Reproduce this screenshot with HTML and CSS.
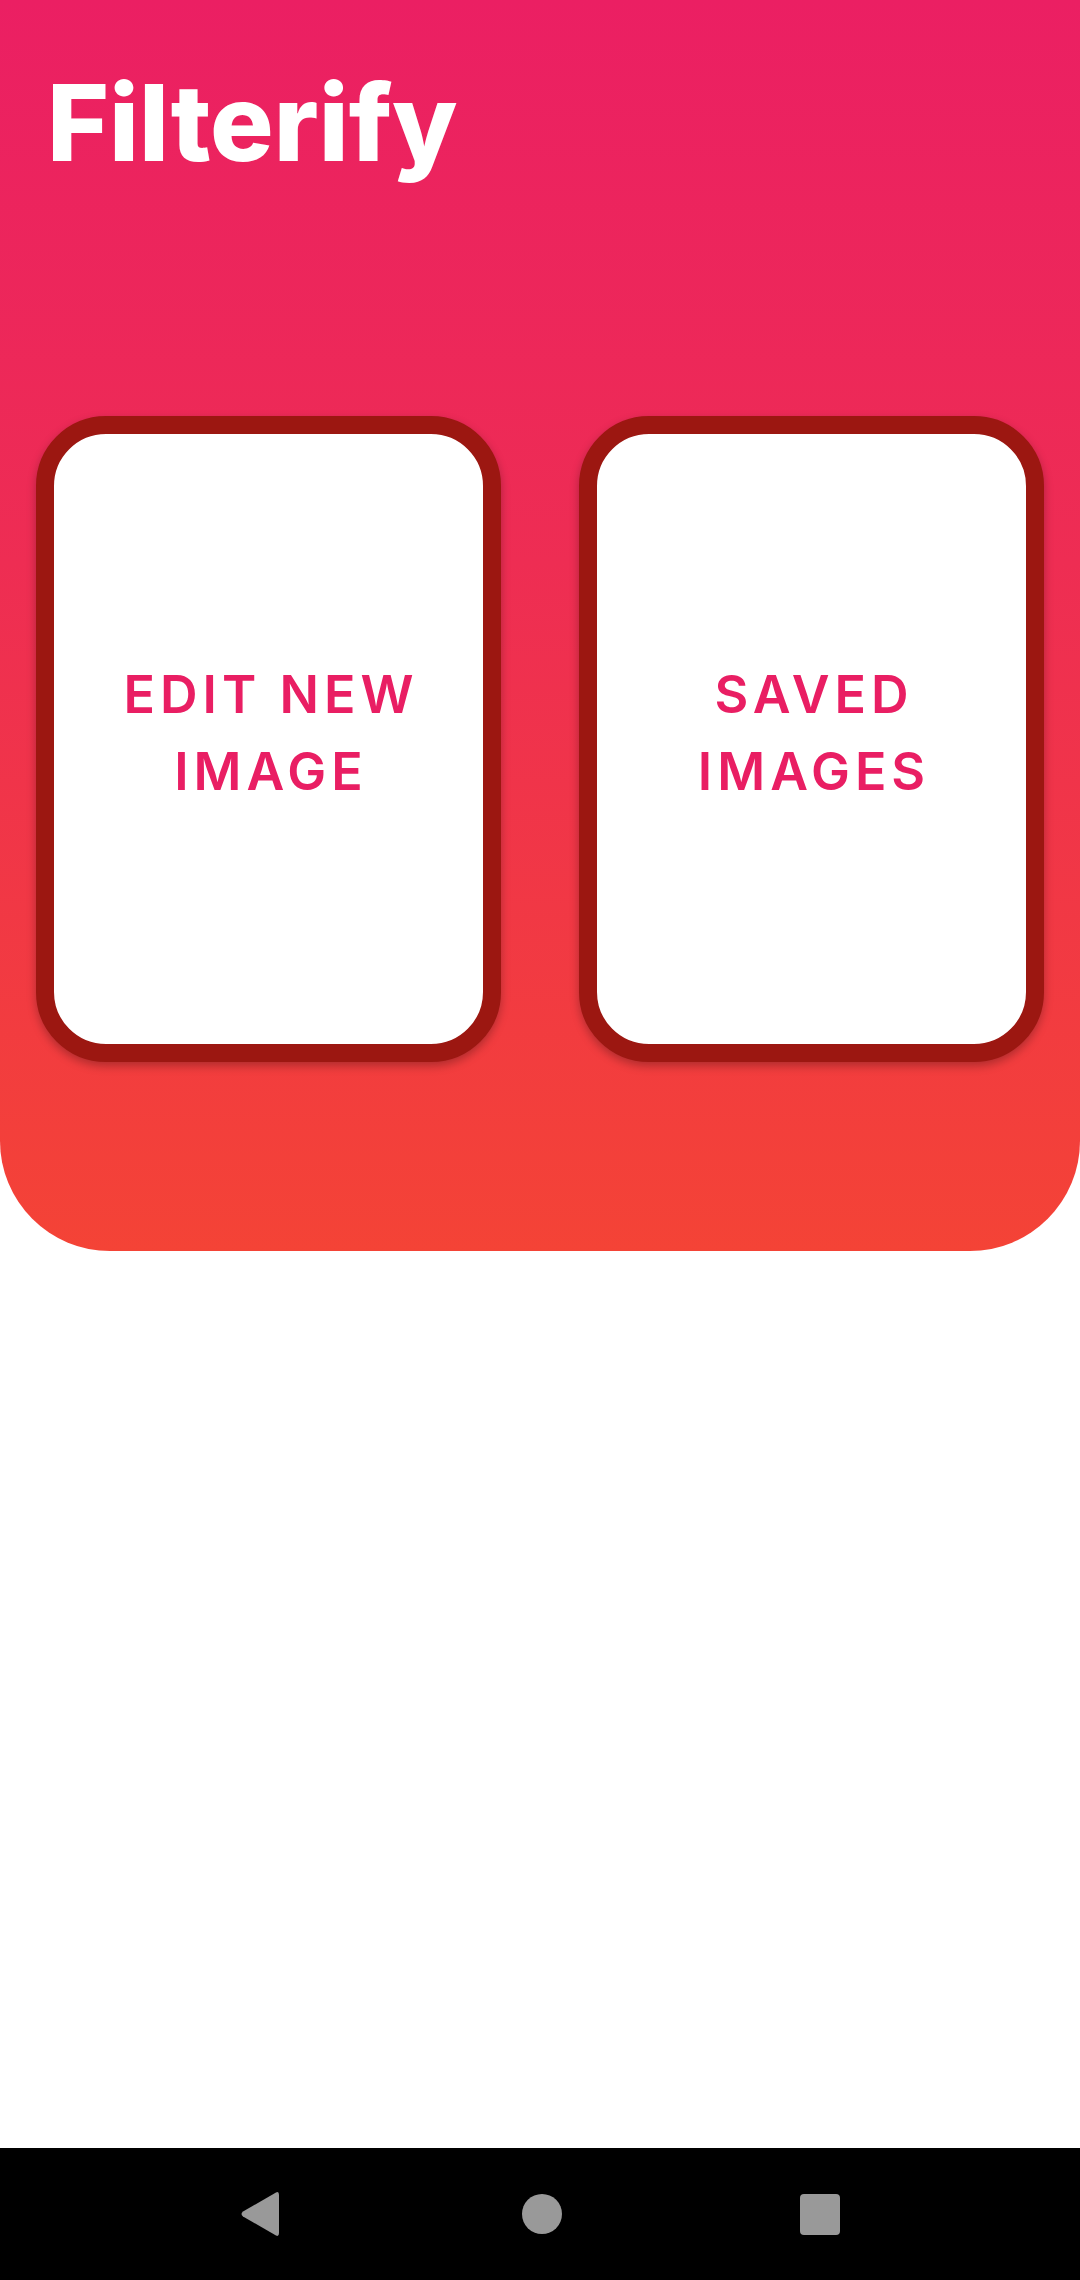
FILE: index.html
```html
<!DOCTYPE html>
<html>
<head>
<meta charset="utf-8">
<link rel="stylesheet" href="styles.css">
</head>
<body>
<div class="screen">
  <header class="header">
    <h1 class="title">Filterify</h1>
    <div class="cards">
      <div class="card"><span class="card-label">EDIT NEW<br>IMAGE</span></div>
      <div class="card"><span class="card-label">SAVED<br>IMAGES</span></div>
    </div>
  </header>
  <main class="content"></main>
  <nav class="navbar">
    <svg class="nav-back" width="40" height="46" viewBox="0 0 40 46">
      <path d="M36 1.5 Q39 0 39 4 L39 42 Q39 46 36 44.5 L3 25.5 Q0 23 3 20.5 Z" fill="#999"/>
    </svg>
    <span class="nav-home"></span>
    <span class="nav-recent"></span>
  </nav>
</div>
</body>
</html>
```

FILE: styles.css
```css
html, body {
  margin: 0;
  padding: 0;
  background: #ffffff;
}
.screen {
  width: 1080px;
  height: 2280px;
  display: flex;
  flex-direction: column;
  overflow: hidden;
}
.header {
  height: 1251px;
  flex: none;
  box-sizing: border-box;
  padding: 0 36px;
  background: linear-gradient(180deg, #EB1F63 0%, #EE2D53 45%, #F44336 100%);
  border-radius: 0 0 110px 110px;
  display: flex;
  flex-direction: column;
}
.title {
  margin: 58px 0 0 0;
  padding-left: 11px;
  height: 130px;
  line-height: 130px;
  font-family: "Inter", "Noto Sans", sans-serif;
  font-weight: 800;
  font-size: 106px;
  letter-spacing: 0;
  color: #ffffff;
}
.cards {
  margin-top: 228px;
  display: flex;
  justify-content: space-between;
}
.card {
  width: 465px;
  height: 646px;
  box-sizing: border-box;
  border: 18px solid #9C1711;
  border-radius: 70px;
  background: #ffffff;
  box-shadow: 0 4px 10px rgba(0, 0, 0, 0.28);
  display: flex;
  align-items: center;
  justify-content: center;
}
.card-label {
  font-family: "Inter", "Noto Sans", sans-serif;
  font-weight: 600;
  font-size: 52px;
  line-height: 77px;
  letter-spacing: 5px;
  text-align: center;
  color: #E91E63;
  margin-left: 5px;
  margin-bottom: 12px;
}
.content {
  flex: 1;
}
.navbar {
  height: 132px;
  flex: none;
  background: #000000;
  display: flex;
  align-items: center;
  justify-content: center;
  gap: 0;
}
.nav-back {
  display: block;
  margin-right: 242px;
}
.nav-home {
  display: block;
  width: 40px;
  height: 40px;
  border-radius: 50%;
  background: #999999;
}
.nav-recent {
  display: block;
  width: 40px;
  height: 41px;
  border-radius: 4px;
  background: #999999;
  margin-left: 238px;
}
```
